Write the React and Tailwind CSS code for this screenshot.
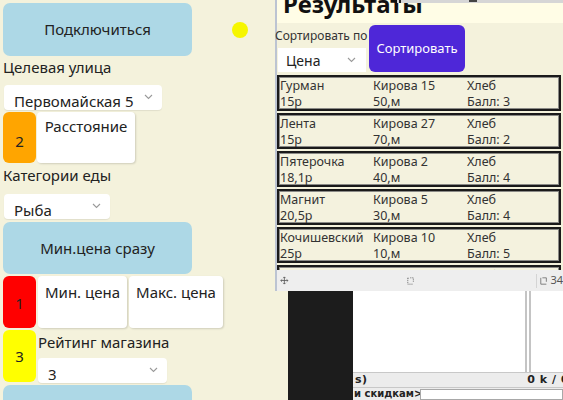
import React from 'react';

const shops = [
  { name: 'Гурман', street: 'Кирова 15', cat: 'Хлеб', price: '15р', dist: '50,м', score: 3 },
  { name: 'Лента', street: 'Кирова 27', cat: 'Хлеб', price: '15р', dist: '70,м', score: 2 },
  { name: 'Пятерочка', street: 'Кирова 2', cat: 'Хлеб', price: '18,1р', dist: '40,м', score: 4 },
  { name: 'Магнит', street: 'Кирова 5', cat: 'Хлеб', price: '20,5р', dist: '30,м', score: 4 },
  { name: 'Кочишевский', street: 'Кирова 10', cat: 'Хлеб', price: '25р', dist: '10,м', score: 5 },
  { name: 'Ашан', street: 'Кирова 1', cat: 'Хлеб', price: '30р', dist: '90,м', score: 4 },
];

const Chevron = ({ className }) => (
  <svg className={className} width="9" height="6" viewBox="0 0 9 6" fill="none">
    <path d="M1 1l3.5 3.5L8 1" stroke="#9a9a9a" strokeWidth="1.1" />
  </svg>
);

const Picker = ({ value, width }) => (
  <div className={`${width} h-[25px] bg-white rounded-[4px] flex items-end justify-between pl-[10px] pr-[9px] overflow-hidden shadow-[0_1px_1px_rgba(0,0,0,0.08)]`}>
    <span className="leading-[20px] -mb-[1px]">{value}</span>
    <Chevron className="mb-[10px]" />
  </div>
);

const ShopCard = ({ shop }) => (
  <div className="h-[36px] shrink-0 border-2 border-[#1a1a1a] shadow-[inset_0_0_0_1px_#8a8a86] bg-[#f4f2de] grid grid-cols-[93px_94px_1fr] pl-[1px] pt-[1px] text-[12.5px] leading-[15px] text-[#333]">
    <span>{shop.name}</span>
    <span>{shop.street}</span>
    <span>{shop.cat}</span>
    <span>{shop.price}</span>
    <span>{shop.dist}</span>
    <span>Балл: {shop.score}</span>
  </div>
);

export default function App() {
  return (
    <div className="relative w-[563px] h-[400px] overflow-hidden flex bg-white text-[#222]" style={{ fontFamily: '"Noto Sans", "Open Sans", sans-serif' }}>
      {/* app form */}
      <div className="w-[288px] shrink-0 h-full bg-[#f4f2dc] pl-[3px] text-[15px]">
        <div className="flex items-center pt-[3px]">
          <button className="w-[189px] h-[53px] bg-[#add8e6] rounded-[7px]">Подключиться</button>
          <div className="ml-[40px] w-[16px] h-[16px] rounded-full bg-[#f6f600]" />
        </div>
        <div className="leading-[20px] mt-[1px]">Целевая улица</div>
        <div className="mt-[8px] ml-[1px]">
          <Picker value="Первомайская 5" width="w-[158px]" />
        </div>
        <div className="flex gap-[1px] mt-[2px] h-[51px]">
          <div className="w-[33px] bg-[#ffa500] rounded-[6px] flex items-center justify-center pt-[7px]">2</div>
          <div className="w-[98px] bg-white rounded-[4px] shadow-[1px_1px_2px_rgba(0,0,0,0.15)] text-center pt-[3px]">Расстояние</div>
        </div>
        <div className="leading-[20px] mt-[2px]">Категории еды</div>
        <div className="mt-[9px] ml-[1px]">
          <Picker value="Рыба" width="w-[106px]" />
        </div>
        <button className="mt-[3px] w-[189px] h-[52px] bg-[#add8e6] rounded-[7px]">Мин.цена сразу</button>
        <div className="flex gap-[2px] mt-[2px] h-[52px]">
          <div className="w-[33px] bg-[#ff0000] rounded-[6px] flex items-center justify-center pt-[3px]">1</div>
          <div className="w-[89px] bg-white rounded-[4px] shadow-[1px_1px_2px_rgba(0,0,0,0.15)] text-center pt-[5px]">Мин. цена</div>
          <div className="w-[94px] bg-white rounded-[4px] shadow-[1px_1px_2px_rgba(0,0,0,0.15)] text-center pt-[5px]">Макс. цена</div>
        </div>
        <div className="flex gap-[2px] mt-[2px] h-[52px]">
          <div className="w-[33px] bg-[#ffff00] rounded-[6px] flex items-center justify-center pt-[1px]">3</div>
          <div className="flex flex-col">
            <div className="leading-[20px] mt-[2px]">Рейтинг магазина</div>
            <div className="mt-[6px]">
              <Picker value="3" width="w-[129px]" />
            </div>
          </div>
        </div>
        <div className="mt-[3px] w-[189px] h-[40px] bg-[#add8e6] rounded-[7px]" />
      </div>

      {/* desktop behind */}
      <div className="flex-1 flex flex-col">
        <div className="h-[291px] bg-[#e8e8e8]" />
        <div className="flex-1 flex">
          <div className="w-[65px] bg-[#1c1c1c]" />
          <div className="flex-1 flex flex-col overflow-hidden">
            <div className="h-[81px] flex">
              <div className="w-[174px] bg-white border-r-2 border-[#c4c4c4]" />
              <div className="w-[2px] bg-white" />
              <div className="flex-1 bg-white border-l-2 border-[#c4c4c4]" />
            </div>
            <div className="h-[16px] bg-[#ececec] border-y border-[#c8c8c8] flex items-center justify-between pl-[2px] text-[11px] font-bold tracking-[0.5px]" style={{ fontFamily: '"DejaVu Sans", sans-serif' }}>
              <span>s)</span>
              <span className="whitespace-nowrap -mr-[6px]">0 k / 6</span>
            </div>
            <div className="flex-1 flex bg-[#ececec]">
              <span className="w-[67px] text-[10px] font-bold leading-[12px] whitespace-nowrap overflow-hidden pl-[1px]" style={{ fontFamily: '"DejaVu Sans", sans-serif' }}>и скидкам&gt;</span>
              <div className="flex-1 bg-white border border-[#a8a8a8] mt-[1px]" />
            </div>
          </div>
        </div>
      </div>

      {/* results window */}
      <div className="absolute left-[275px] top-0 w-[288px] h-[291px] border-l-2 border-[#bcc4d2] bg-[#f4f2dc] flex flex-col">
        <div className="absolute right-0 top-0 w-[166px] h-[3px] bg-[#d6d6d6] flex">
          <div className="ml-[2px] w-[2px] h-[3px] bg-[#222]" />
          <div className="ml-[68px] w-[8px] h-[2px] bg-[#444]" />
        </div>
        <div className="h-[23px] shrink-0 bg-[#fffde6] overflow-hidden pl-[6px]">
          <div className="text-[24px] font-bold leading-[24px] -mt-[8px] text-[#111]">Результаты</div>
        </div>
        <div className="flex mt-[2px] h-[47px] shrink-0">
          <div className="w-[92px] flex flex-col -ml-[2px]">
            <div className="text-[12px] leading-[17px] mt-[2px] text-[#333] whitespace-nowrap">Сортировать по</div>
            <div className="mt-[4px] ml-[3px]">
              <div className="w-[88px] h-[24px] bg-white flex items-center justify-between pl-[8px] pr-[10px] text-[14px]">
                <span>Цена</span>
                <Chevron />
              </div>
            </div>
          </div>
          <button className="ml-[2px] w-[96px] h-[47px] bg-[#4e27d8] rounded-[6px] text-white text-[13px]">Сортировать</button>
        </div>
        <div className="flex-1 flex flex-col gap-[2px] mt-[3px] pr-[2px] overflow-hidden">
          {shops.map((s) => (
            <ShopCard key={s.name} shop={s} />
          ))}
        </div>
        <div className="h-[21px] shrink-0 bg-[#eeeeee] flex items-center text-[11px] text-[#555]">
          <svg className="ml-[3px]" width="11" height="11" viewBox="0 0 11 11" fill="none" stroke="#555" strokeWidth="1">
            <path d="M5.5 1v9M1 5.5h9M4 2.5l1.5-1.5 1.5 1.5M4 8.5l1.5 1.5 1.5-1.5M2.5 4L1 5.5 2.5 7M8.5 4L10 5.5 8.5 7" />
          </svg>
          <svg className="ml-[118px]" width="10" height="10" viewBox="0 0 10 10" fill="none">
            <path d="M1 1.5h1M1 1v8h7M4 1h4v5" stroke="#666" strokeWidth="1" strokeDasharray="1.5 1" />
          </svg>
          <div className="ml-[121px] w-[1px] h-[14px] bg-[#d4d4d4]" />
          <svg className="ml-[4px]" width="10" height="10" viewBox="0 0 10 10" fill="none">
            <path d="M1 1v8h7M3 1h5v5" stroke="#666" strokeWidth="1" />
          </svg>
          <span className="ml-[2px]">34</span>
        </div>
      </div>
    </div>
  );
}
